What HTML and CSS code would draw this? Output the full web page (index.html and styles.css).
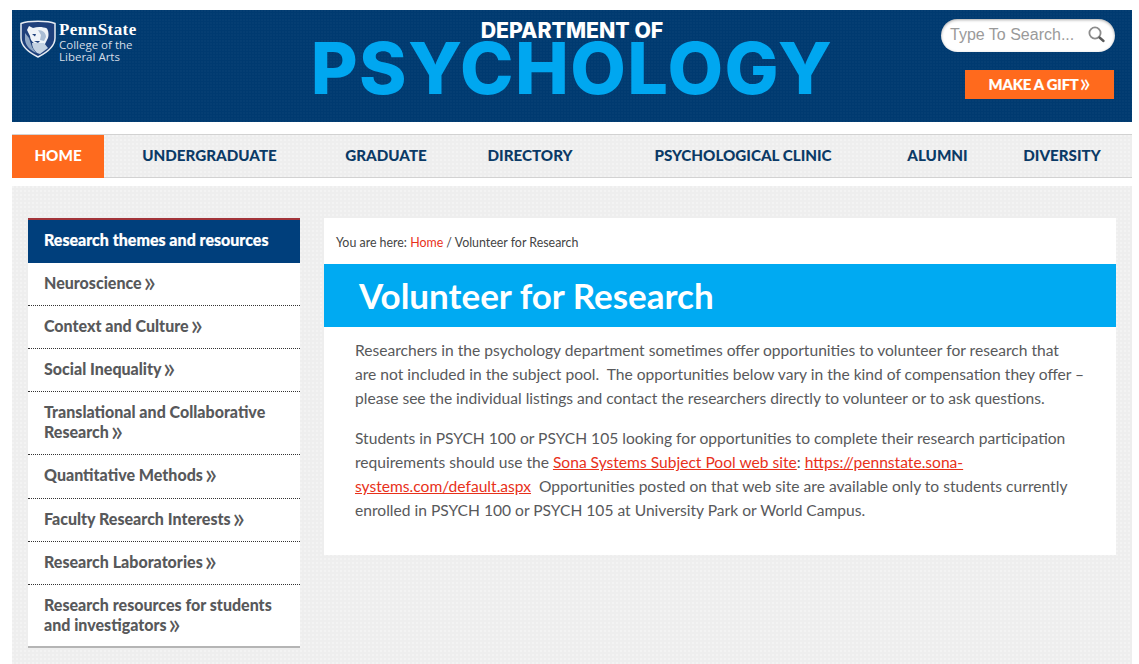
FILE: index.html
```html
<!DOCTYPE html>
<html lang="en">
<head>
<meta charset="utf-8">
<title>Volunteer for Research | Department of Psychology</title>
<link rel="stylesheet" href="styles.css">
</head>
<body>
<div class="page">
  <header class="masthead">
    <a class="brand" href="#">
      <svg class="shield" width="36" height="38" viewBox="0 0 36 38" aria-hidden="true">
        <path d="M1 3.5 C8 .5 28 .5 35 3.5 L35 18 C35 27 26 33 18 37 C10 33 1 27 1 18 Z" fill="#1e407c" stroke="#e6ebf2" stroke-width="1.5"/>
        <path d="M7 10 L9 6 L13 8 C17 6.5 23 6.5 27 8.5 C29 12 29 17 27 20 L25 24 L15 24 C12 22 10 19 10 16 Z" fill="#eef3f8"/>
        <path d="M12 23 L24 23 L28 28 L20 34 L17 33 C14 30 12 27 12 23 Z" fill="#c4d2e2"/>
        <path d="M5 13 L9 18 L12 27 L16 33 C10 30 6 26 5 20 Z" fill="#8ea6c4"/>
        <path d="M18 10 C23 10 26 13 26 17 L24 21 L20 20 L21 15 Z" fill="#a9bdd5"/>
        <path d="M12 14 L16 14 L15 16.5 Z M14 21 L20 21 L18 23 Z" fill="#1e407c"/>
      </svg>
      <span class="brand-text">
        <span class="brand-name">PennState</span>
        <span class="brand-sub">College of the</span>
        <span class="brand-sub">Liberal Arts</span>
      </span>
    </a>
    <div class="site-title">
      <span class="title-small">DEPARTMENT OF</span>
      <span class="title-big">PSYCHOLOGY</span>
    </div>
    <div class="tools">
      <div class="search">
        <span class="search-hint">Type To Search...</span>
        <svg width="18" height="18" viewBox="0 0 18 18" aria-hidden="true">
          <circle cx="7" cy="7" r="5.6" fill="none" stroke="#8c8c8c" stroke-width="1.8"/>
          <path d="M11.5 11.5 L15.5 15" stroke="#5a5a5a" stroke-width="2.4" stroke-linecap="round"/>
        </svg>
      </div>
      <a class="gift" href="#">MAKE A GIFT <span class="chev">»</span></a>
    </div>
  </header>

  <nav class="mainnav">
    <a class="navitem active" href="#">HOME</a>
    <a class="navitem" href="#">UNDERGRADUATE</a>
    <a class="navitem" href="#">GRADUATE</a>
    <a class="navitem" href="#">DIRECTORY</a>
    <a class="navitem" href="#">PSYCHOLOGICAL CLINIC</a>
    <a class="navitem" href="#">ALUMNI</a>
    <a class="navitem" href="#">DIVERSITY</a>
  </nav>

  <main class="body-wrap">
    <aside class="sidebar">
      <a class="side-head" href="#">Research themes and resources</a>
      <a class="side-link" href="#">Neuroscience <span class="chev">»</span></a>
      <a class="side-link" href="#">Context and Culture <span class="chev">»</span></a>
      <a class="side-link" href="#">Social Inequality <span class="chev">»</span></a>
      <a class="side-link" href="#">Translational and Collaborative Research <span class="chev">»</span></a>
      <a class="side-link side-link-tall" href="#">Quantitative Methods <span class="chev">»</span></a>
      <a class="side-link" href="#">Faculty Research Interests <span class="chev">»</span></a>
      <a class="side-link" href="#">Research Laboratories <span class="chev">»</span></a>
      <a class="side-link" href="#">Research resources for students and investigators <span class="chev">»</span></a>
    </aside>
    <article class="content">
      <p class="crumbs">You are here: <a href="#">Home</a> / Volunteer for Research</p>
      <h1 class="page-title">Volunteer for Research</h1>
      <div class="copy">
        <p>Researchers in the psychology department sometimes offer opportunities to volunteer for research that<br>are not included in the subject pool.&nbsp; The opportunities below vary in the kind of compensation they offer – please see the individual listings and contact the researchers directly to volunteer or to ask questions.</p>
        <p>Students in PSYCH 100 or PSYCH 105 looking for opportunities to complete their research participation requirements should use the <a href="#">Sona Systems Subject Pool web site</a>: <a href="#">https://pennstate.sona-systems.com/default.aspx</a>&nbsp; Opportunities posted on that web site are available only to students currently enrolled in PSYCH 100 or PSYCH 105 at University Park or World Campus.</p>
      </div>
    </article>
  </main>
</div>
</body>
</html>
```
FILE: styles.css
```css
* { box-sizing: border-box; }
html, body { margin: 0; height: 100%; background: #fff; overflow: hidden; }
body { font-family: "Lato", "Open Sans", sans-serif; color: #58595b; }
a { text-decoration: none; color: inherit; }
p { margin: 0; }

.page { padding: 10px 7px 0 12px; width: 1139px; height: 664px; overflow: hidden; }

.masthead {
  height: 112px;
  background-color: #003a70;
  background-image: radial-gradient(circle at 1px 1px, rgba(255,255,255,.02) 1px, transparent 1px);
  background-size: 3px 3px;
  display: grid;
  grid-template-columns: 260px 1fr 260px;
  color: #fff;
}
.brand { display: flex; gap: 3px; padding: 10px 0 0 8px; align-items: flex-start; }
.shield { flex: none; }
.brand-text { display: flex; flex-direction: column; margin-top: 1px; }
.brand-name { font: 700 17px/18px "Liberation Serif", serif; letter-spacing: .45px; color: #fff; }
.brand-sub { font: 400 11.5px/12px "Open Sans", sans-serif; color: #d5dde7; }

.site-title { display: flex; flex-direction: column; align-items: center; padding-top: 8px; }
.title-small { font: 800 21.3px/24px "Inter", sans-serif; color: #fff; position: relative; z-index: 1; }
.title-big { font: 800 72px/58px "Inter", sans-serif; color: #00a7f0; letter-spacing: 1.4px; margin-top: -3px; white-space: nowrap; }

.tools { display: flex; flex-direction: column; align-items: flex-end; padding: 9px 17px 0 0; }
.search {
  width: 174px; height: 33px; border-radius: 17px; background: #fff;
  box-shadow: inset 0 1px 3px rgba(0,0,0,.35);
  display: flex; align-items: center; justify-content: space-between;
  padding: 0 9px 2px 9px;
}
.search-hint { font: 400 16px/20px "Liberation Sans", sans-serif; color: #9a9a9a; white-space: nowrap; }
.gift {
  margin-top: 18px; width: 149px; height: 29px; background: #ff6a1d; color: #fff;
  font: 900 14.8px/29px "Lato", sans-serif; text-align: center; margin-right: 1px; letter-spacing: -.2px;
  -webkit-text-stroke: .2px #fff;
}
.gift .chev { font-size: 26px; font-weight: 400; line-height: 0; vertical-align: -2px; margin-left: -2px; -webkit-text-stroke: 0; }

.mainnav {
  margin-top: 12px; height: 44px;
  display: grid; grid-template-columns: 92px 211px 142px 146px 280px 109px 140px;
  background-color: #eee;
  background-image: radial-gradient(circle at 1px 1px, rgba(255,255,255,.3) 1px, transparent 1px);
  background-size: 4px 4px;
  border-top: 1px solid #d2d2d2; border-bottom: 1px solid #d2d2d2;
}
.navitem {
  font: 900 15.2px/40px "Lato", sans-serif; color: #0b3a66; text-align: center; white-space: nowrap;
}
.navitem.active { background: #ff6a1d; color: #fff; margin-bottom: -1px; }

.body-wrap {
  margin-top: 8px; height: 478px; padding: 32px 16px 0;
  background-color: #eee;
  background-image: radial-gradient(circle at 1px 1px, rgba(255,255,255,.3) 1px, transparent 1px);
  background-size: 4px 4px;
  display: grid; grid-template-columns: 272px 792px; column-gap: 24px; align-items: start;
}

.sidebar { display: flex; flex-direction: column; background: #fff; border-bottom: 2px solid #b5b5b5; }
.side-head {
  background: #003f7c; border-top: 2px solid #a2343a; height: 45px;
  padding: 10px 16px 0; color: #fff; font: 900 16px/20px "Lato", sans-serif; white-space: nowrap;
  -webkit-text-stroke: .2px #fff;
}
.side-link {
  padding: 10px 16px 12px; font: 900 16px/20px "Lato", sans-serif; color: #58595b;
  border-bottom: 1px dotted #333;
}
.side-link-tall { padding-bottom: 13px; }
.side-link:last-child { border-bottom: 0; padding-bottom: 11px; }
.side-link .chev { font-size: 29px; font-weight: 400; line-height: 0; vertical-align: -3px; margin-left: -2px; }

.content { background: #fff; height: 337px; }
.crumbs { font: 400 12.4px/16px "Lato", sans-serif; color: #444; padding: 17px 0 0 12px; height: 46px; }
.crumbs a { color: #e8311a; }
.page-title {
  margin: 0; height: 63px; background: #00aaf2; color: #fff;
  font: 700 35px/63px "Lato", sans-serif; padding-left: 35px;
}
.copy { padding: 11px 26px 0 31px; font: 400 15.6px/24px "Lato", sans-serif; color: #58595b; }
.copy p + p { margin-top: 16px; }
.copy a { color: #e8311a; text-decoration: underline; }
```
